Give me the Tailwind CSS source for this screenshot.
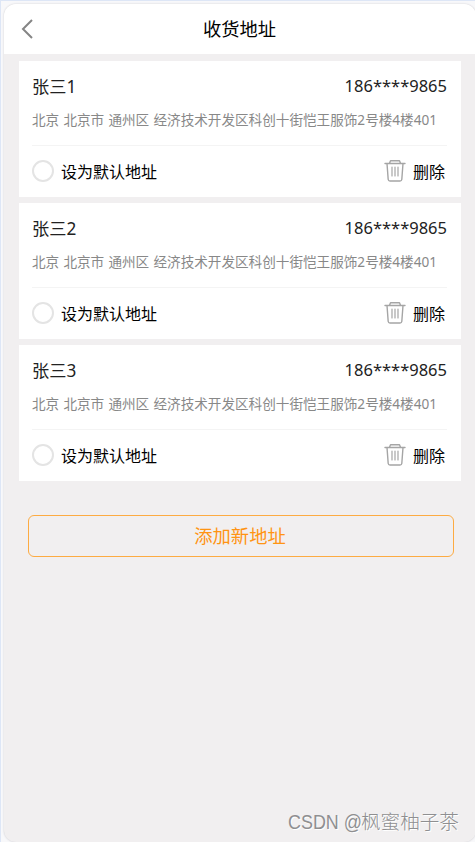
<!DOCTYPE html>
<html lang="zh-CN">
<head>
<meta charset="UTF-8">
<title>收货地址</title>
<script src="https://cdn.jsdelivr.net/npm/@tailwindcss/browser@4"></script>
</head>
<body class="w-[475px] h-[842px] overflow-hidden bg-[#f8f8fa] border-t border-l-1 border-[#dde6f6] pl-[3px] pt-[3px] font-['Noto_Sans','Noto_Sans_CJK_SC',sans-serif]">
<div class="relative h-[838px] w-[472px] rounded-[12px] bg-[#f1eff0] overflow-hidden shadow-[0_0_2px_#c8c8cc]">
  <header class="relative h-[50px] bg-white flex items-center justify-center">
    <svg class="absolute left-[17px] top-[14px]" width="13" height="22" viewBox="0 0 13 22" fill="none" stroke="#858585" stroke-width="2"><path d="M11 2L2 11L11 20"/></svg>
    <h1 class="text-[18.3px] leading-[26px] text-black mr-px">收货地址</h1>
  </header>
  <main id="list" class="pt-[7px] pl-[15px] w-[457px] flex flex-col gap-[6px]"></main>
  <button class="mt-[34px] ml-[24px] block w-[426px] h-[42px] rounded-[6px] border border-[#fdab42] text-[#ff9413] text-[18.3px] leading-[40px] pr-[2px]">添加新地址</button>
  <div class="absolute left-[284px] top-[804px] text-[19.6px] leading-[28px] text-[#8f8f91] whitespace-nowrap [text-shadow:1px_1px_0_#ffffff]"><span class="inline-block w-[73px] origin-left scale-x-[0.915] font-['Liberation_Sans']">CSDN @</span><span class="font-light">枫蜜柚子茶</span></div>
</div>
<template id="card">
  <section class="h-[136px] w-[442px] bg-white pl-[13px] pr-[14px]">
    <div class="flex justify-between pt-[13px] h-[46px] text-[#222] leading-[24px]">
      <span class="name text-[17.2px] leading-[26px]"></span>
      <span class="phone text-[16.5px]">186****9865</span>
    </div>
    <p class="h-[38px] text-[13.6px] leading-[26px] text-[#888] whitespace-nowrap [word-spacing:0.7px]">北京 北京市 通州区 经济技术开发区科创十街恺王服饰2号楼4楼401</p>
    <div class="flex items-center border-t border-[#f4f4f4] h-[52px] text-[16px] text-black">
      <i class="size-[22px] rounded-full border-2 border-[#e4e4e4] mr-[7px] -mt-px"></i>
      <span>设为默认地址</span>
      <svg class="ml-auto mr-[7px] -mt-[2px]" width="22" height="24" viewBox="0 0 22 24" fill="none" stroke="#a5a5a5" stroke-width="1.4" stroke-linecap="round" stroke-linejoin="round"><path d="M1 4.5H21M5.5 4.2L6.5 1.7H15.5L16.5 4.2M3 4.5L4.2 20.5Q4.4 22 6 22H16Q17.600 22 17.8 20.500L19 4.500"/><path stroke-width="1.2" d="M8 8V17M11 8V17M14 8V17"/></svg>
      <span class="mr-[2px]">删除</span>
    </div>
  </section>
</template>
<script>
  const tpl = document.getElementById('card');
  for (const name of ['张三1', '张三2', '张三3']) {
    const card = tpl.content.cloneNode(true);
    card.querySelector('.name').textContent = name;
    document.getElementById('list').append(card);
  }
</script>
</body>
</html>
